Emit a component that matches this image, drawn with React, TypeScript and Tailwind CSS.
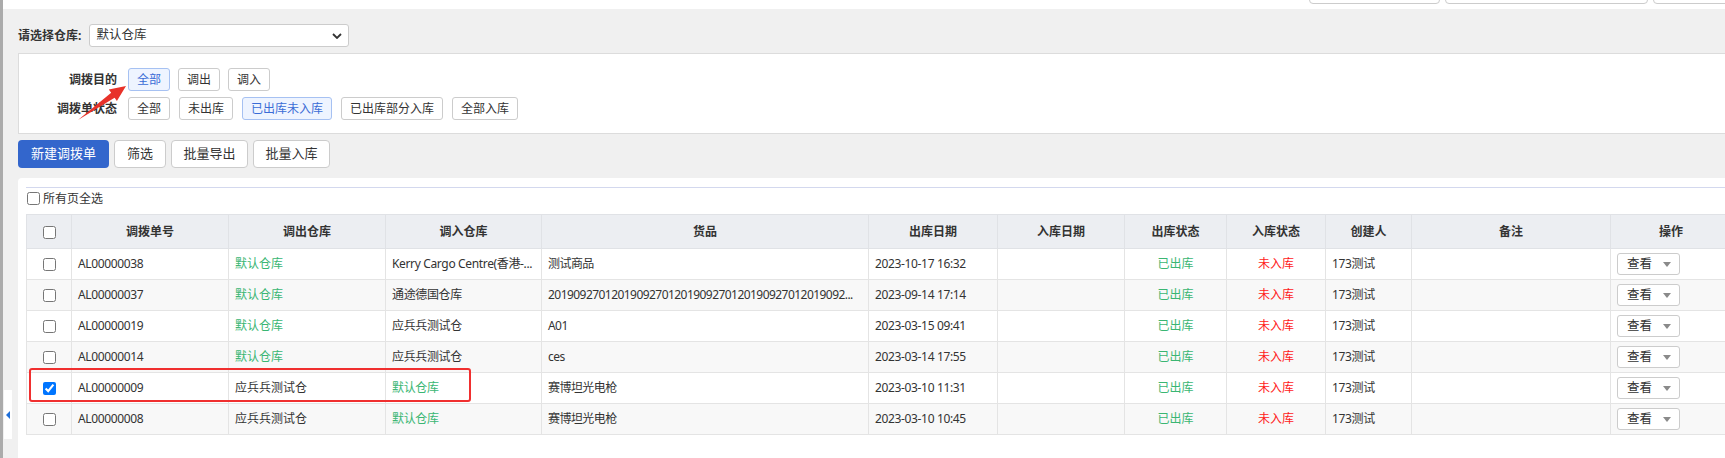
import React from "react";

type Row = {
  no: string;
  out: string;
  inn: string;
  goods: string;
  date: string;
  checked?: boolean;
};

const rows: Row[] = [
  { no: "AL00000038", out: "默认仓库", inn: "Kerry Cargo Centre(香港-...", goods: "测试商品", date: "2023-10-17 16:32" },
  { no: "AL00000037", out: "默认仓库", inn: "通途德国仓库", goods: "20190927012019092701201909270120190927012019092...", date: "2023-09-14 17:14" },
  { no: "AL00000019", out: "默认仓库", inn: "应兵兵测试仓", goods: "A01", date: "2023-03-15 09:41" },
  { no: "AL00000014", out: "默认仓库", inn: "应兵兵测试仓", goods: "ces", date: "2023-03-14 17:55" },
  { no: "AL00000009", out: "应兵兵测试仓", inn: "默认仓库", goods: "赛博坦光电枪", date: "2023-03-10 11:31", checked: true },
  { no: "AL00000008", out: "应兵兵测试仓", inn: "默认仓库", goods: "赛博坦光电枪", date: "2023-03-10 10:45" },
];

const headers = ["调拨单号", "调出仓库", "调入仓库", "货品", "出库日期", "入库日期", "出库状态", "入库状态", "创建人", "备注", "操作"];

function FilterBtn({ label, active }: { label: string; active?: boolean }) {
  return (
    <button
      className={
        "h-[23px] rounded-[3px] border px-[8px] text-[12px] leading-none " +
        (active ? "border-[#a6c1f2] bg-[#eef4ff] text-[#3a6cd6]" : "border-[#cccccc] bg-white text-[#333]")
      }
    >
      {label}
    </button>
  );
}

function Warehouse({ name }: { name: string }) {
  return <span className={name === "默认仓库" ? "text-[#3ab673]" : ""}>{name}</span>;
}

const cell = "h-[31px] border border-[#e4e4e4] px-[6px] whitespace-nowrap overflow-hidden text-ellipsis";
// 拉丁字符略窄，贴近原图字宽
const latin = " tracking-[-0.35px]";

export default function App() {
  return (
    <div className="relative flex h-[458px] w-[1725px] overflow-hidden bg-[#f0f0f0] font-['Noto_Sans','Noto_Sans_CJK_SC',sans-serif] text-[12px] text-[#333]">
      <div className="w-[3px] shrink-0 bg-[#ababab]" />

      <div className="flex min-w-0 flex-1 flex-col">
        {/* 顶部被截断的按钮 */}
        <div className="flex h-[9px] items-end gap-[5px] overflow-hidden bg-white pb-[5px] pl-[1306px]">
          <div className="h-[30px] w-[131px] shrink-0 rounded-[4px] border border-[#cccccc]" />
          <div className="h-[30px] w-[203px] shrink-0 rounded-[4px] border border-[#cccccc]" />
          <div className="h-[30px] w-[100px] shrink-0 rounded-[4px] border border-[#cccccc]" />
        </div>

        <div className="mb-[6px] mt-[15px] flex h-[23px] items-center pl-[15px]">
          <span className="mr-[8px] font-bold">请选择仓库:</span>
          <div className="flex h-[23px] w-[260px] items-center justify-between rounded-[3px] border border-[#cccccc] bg-white pl-[6px] pr-[6px] text-[12.5px]">
            <span>默认仓库</span>
            <svg width="10" height="6" viewBox="0 0 10 6">
              <path d="M1 1l4 4 4-4" fill="none" stroke="#333" strokeWidth="1.8" />
            </svg>
          </div>
        </div>

        <div className="ml-[15px] border border-r-0 border-[#dcdcdc] bg-white pb-[13px] pt-[14px]">
          <div className="flex items-center">
            <span className="w-[98px] text-right font-bold">调拨目的</span>
            <div className="ml-[11px] flex gap-[8px]">
              <FilterBtn label="全部" active />
              <FilterBtn label="调出" />
              <FilterBtn label="调入" />
            </div>
          </div>
          <div className="mt-[6px] flex items-center">
            <span className="w-[98px] text-right font-bold">调拨单状态</span>
            <div className="ml-[11px] flex gap-[9px]">
              <FilterBtn label="全部" />
              <FilterBtn label="未出库" />
              <FilterBtn label="已出库未入库" active />
              <FilterBtn label="已出库部分入库" />
              <FilterBtn label="全部入库" />
            </div>
          </div>
        </div>

        <div className="ml-[15px] mt-[6px] flex h-[28px] gap-[5px] text-[13px]">
          <button className="w-[91px] rounded-[4px] bg-[#3366cc] text-white">新建调拨单</button>
          <button className="w-[52px] rounded-[4px] border border-[#cccccc] bg-white">筛选</button>
          <button className="w-[77px] rounded-[4px] border border-[#cccccc] bg-white">批量导出</button>
          <button className="w-[77px] rounded-[4px] border border-[#cccccc] bg-white">批量入库</button>
        </div>

        <div className="ml-[15px] mt-[10px] flex-1 rounded-tl-[4px] bg-white pl-[8px] pt-[9px]">
          <div className="border-t border-[#d3d8ee]">
            <label className="flex h-[26px] items-start pt-[4px]">
              <input type="checkbox" className="m-0 ml-[1px] h-[13px] w-[13px]" />
              <span className="ml-[3px] leading-[13px]">所有页全选</span>
            </label>
            <table className="w-[1705px] table-fixed border-collapse">
              <colgroup>
                <col className="w-[45px]" />
                <col className="w-[157px]" />
                <col className="w-[157px]" />
                <col className="w-[156px]" />
                <col className="w-[327px]" />
                <col className="w-[129px]" />
                <col className="w-[127px]" />
                <col className="w-[102px]" />
                <col className="w-[99px]" />
                <col className="w-[86px]" />
                <col className="w-[199px]" />
                <col className="w-[121px]" />
              </colgroup>
              <thead>
                <tr className="h-[34px] bg-[#eceef2]">
                  <th className="border border-[#e0e2e6]">
                    <input type="checkbox" className="m-0 h-[13px] w-[13px] align-middle" />
                  </th>
                  {headers.map((h) => (
                    <th key={h} className="border border-[#e0e2e6] font-bold">
                      {h}
                    </th>
                  ))}
                </tr>
              </thead>
              <tbody>
                {rows.map((r, i) => (
                  <tr key={r.no} className={i % 2 === 1 ? "bg-[#f8f8f8]" : "bg-white"}>
                    <td className={cell + " text-center"}>
                      <input type="checkbox" defaultChecked={r.checked} className="m-0 h-[13px] w-[13px] align-middle" />
                    </td>
                    <td className={cell + latin}>{r.no}</td>
                    <td className={cell}>
                      <Warehouse name={r.out} />
                    </td>
                    <td className={cell + latin}>
                      <Warehouse name={r.inn} />
                    </td>
                    <td className={cell + " tracking-[-0.55px]"}>{r.goods}</td>
                    <td className={cell + latin}>{r.date}</td>
                    <td className={cell}></td>
                    <td className={cell + " text-center text-[#3ab673]"}>已出库</td>
                    <td className={cell + " text-center text-[#ff1a1a]"}>未入库</td>
                    <td className={cell + latin}>173测试</td>
                    <td className={cell}></td>
                    <td className={cell}>
                      <div className="flex h-[22px] w-[63px] items-center justify-between rounded-[3px] border border-[#cccccc] bg-white pl-[9px] pr-[8px] text-[12.5px]">
                        <span>查看</span>
                        <span className="h-0 w-0 border-x-[4px] border-t-[5px] border-x-transparent border-t-[#8a8a8a]" />
                      </div>
                    </td>
                  </tr>
                ))}
              </tbody>
            </table>
          </div>
        </div>
      </div>

      {/* 左侧收起标签 */}
      <div className="absolute left-[4px] top-[390px] flex h-[49px] w-[8px] items-center justify-center bg-white">
        <span className="h-0 w-0 border-y-[4px] border-r-[4px] border-y-transparent border-r-[#1e6fd9]" />
      </div>

      {/* 标注：箭头与红框 */}
      <svg className="absolute left-[76px] top-[84px]" width="52" height="38" viewBox="0 0 52 38">
        <path d="M2 36 L35.2 8.8 L32.8 5.5 L50 2 L40.9 17 L38.6 13.7 Z" fill="#e8322a" />
      </svg>
      <div className="absolute left-[29px] top-[368px] h-[34px] w-[442px] rounded-[3px] border-2 border-[#f02f2f]" />
    </div>
  );
}
